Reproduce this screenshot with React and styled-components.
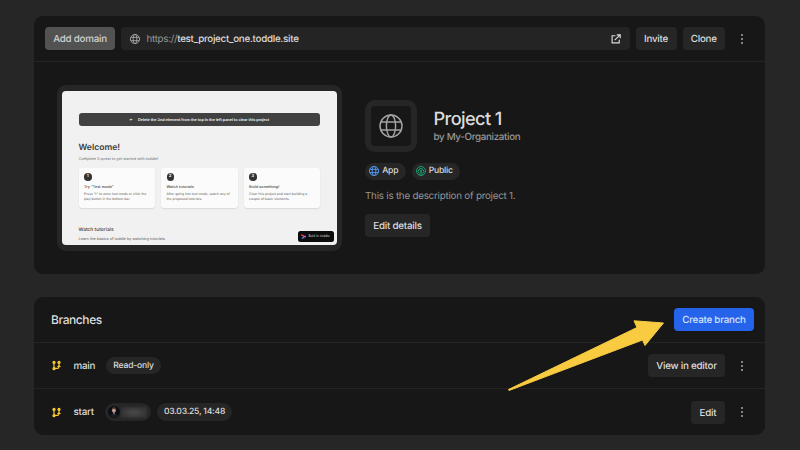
import React from "react";
import styled, { createGlobalStyle } from "styled-components";

const Global = createGlobalStyle`
  *, *::before, *::after { box-sizing: border-box; }
  body {
    margin: 0;
    background: #262626;
    color: #dcdcdc;
    font-family: Inter, "Liberation Sans", sans-serif;
    font-size: 10px;
    overflow: hidden;
    text-rendering: geometricPrecision;
  }
`;

const Page = styled.main`
  width: 800px;
  height: 450px;
  padding: 16px 35px 0 34px;
  display: flex;
  flex-direction: column;
  gap: 23.5px;
`;

const Card = styled.section`
  height: ${(p) => p.$height}px;
  flex: none;
  background: #171717;
  border-radius: 9px;
  overflow: hidden;
`;

const Toolbar = styled.header`
  height: 46px;
  display: flex;
  align-items: center;
  padding: 0 17px 0 11px;
  gap: 6px;
  border-bottom: 1px solid #242424;
`;

const Button = styled.button`
  width: ${(p) => p.$width}px;
  height: 23px;
  flex: none;
  padding: 2px 0 0;
  border: 0;
  border-radius: 4px;
  background: ${(p) => p.$background || "#262626"};
  color: ${(p) => p.$color || "#dcdcdc"};
  font: 500 9.8px/22px Inter, sans-serif;
  letter-spacing: -0.25px;
  text-rendering: inherit;
  white-space: nowrap;
`;

const UrlField = styled.div`
  flex: 1;
  height: 23px;
  display: flex;
  align-items: center;
  padding: 0 9px 0 9px;
  border-radius: 4px;
  background: #242424;
  font-size: 9.8px;
  font-weight: 500;
  letter-spacing: -0.29px;
`;

const UrlText = styled.span`
  flex: 1;
  margin-left: 6.5px;
  line-height: 22px;
  padding-top: 2px;
  white-space: nowrap;
`;

const Muted = styled.span`
  color: #959595;
  font-weight: 400;
`;

const Dots = styled.span`
  width: 12px;
  height: 12px;
  margin-left: ${(p) => p.$gap || 0}px;
  display: flex;
  flex-direction: column;
  align-items: center;
  justify-content: center;
  gap: 2px;
`;

const Dot = styled.i`
  width: 2px;
  height: 2px;
  border-radius: 1px;
  background: #a8a8a8;
`;

const Overview = styled.div`
  display: flex;
  padding: 23px 0 0 22.5px;
  gap: 23px;
`;

const Preview = styled.div`
  width: 285.5px;
  height: 165.5px;
  padding: 5.5px;
  border-radius: 9px;
  background: #262626;
`;

const PreviewPage = styled.div`
  height: 100%;
  padding: 22.6px 16.5px 0;
  border-radius: 4px;
  overflow: hidden;
  background: #f1f1f1;
  color: #3b3b3b;
  position: relative;
`;

const Banner = styled.div`
  height: 13px;
  border-radius: 3px;
  background: #414141;
  color: #fff;
  display: flex;
  align-items: center;
  justify-content: center;
  gap: 5px;
  font-size: 3.8px;
  font-weight: 600;
  white-space: nowrap;
`;

const PreviewLine = styled.div`
  margin-top: ${(p) => p.$top}px;
  height: ${(p) => p.$height}px;
  font-size: ${(p) => p.$size}px;
  line-height: ${(p) => p.$height}px;
  font-weight: ${(p) => p.$weight || 400};
  color: ${(p) => p.$color || "#3b3b3b"};
  white-space: nowrap;
`;

const Steps = styled.div`
  margin-top: 5.5px;
  display: grid;
  grid-template-columns: repeat(3, 1fr);
  gap: 6px;
`;

const Step = styled.div`
  height: 40.5px;
  padding: 5.5px 0 0 5.5px;
  border-radius: 3px;
  background: #fbfbfb;
  box-shadow: 0 1px 1.5px rgba(0, 0, 0, 0.1);
`;

const StepNumber = styled.div`
  width: 7.5px;
  height: 7.5px;
  border-radius: 50%;
  background: #333;
  color: #fff;
  font-size: 4.5px;
  font-weight: 600;
  line-height: 8.5px;
  text-align: center;
`;

const BuiltIn = styled.div`
  position: absolute;
  right: 3px;
  bottom: 3px;
  width: 36px;
  height: 11.5px;
  border-radius: 2.5px;
  background: #0c0c0c;
  color: #ddd;
  display: flex;
  align-items: center;
  padding-left: 3px;
  gap: 2.5px;
  font-size: 3.3px;
  white-space: nowrap;
`;

const Info = styled.div`
  padding-top: 15px;
`;

const Identity = styled.div`
  display: flex;
  gap: 17px;
`;

const IconBox = styled.div`
  width: 51.5px;
  height: 51.5px;
  border: 6px solid #262626;
  border-radius: 10px;
  display: grid;
  place-items: center;
`;

const Title = styled.h1`
  margin: 7.5px 0 0.5px;
  font-size: 18.2px;
  line-height: 22px;
  font-weight: 500;
  letter-spacing: -0.6px;
`;

const Owner = styled.div`
  color: #989898;
  font-size: 9.8px;
  font-weight: 500;
  line-height: 16px;
  letter-spacing: -0.32px;
`;

const Pills = styled.div`
  display: flex;
  gap: 6px;
  margin-top: 11px;
`;

const Pill = styled.span`
  width: ${(p) => p.$width}px;
  height: 17.5px;
  flex: none;
  padding: 0 ${(p) => (p.$icon ? p.$inset || 4 : 0)}px;
  border-radius: 9px;
  background: #262626;
  display: flex;
  align-items: center;
  justify-content: ${(p) => (p.$icon ? "flex-start" : "center")};
  gap: ${(p) => p.$gap || 3.2}px;
  font-size: 8.6px;
  font-weight: 500;
  letter-spacing: -0.22px;
  white-space: nowrap;
`;

const Description = styled.p`
  margin: 10px 0 9.5px;
  line-height: 14px;
  height: 14px;
  font-size: 9.8px;
  letter-spacing: -0.23px;
  color: #969696;
`;

const Row = styled.div`
  height: ${(p) => p.$height || 46}px;
  display: flex;
  align-items: center;
  padding: 0 ${(p) => p.$right || 17}px 0 17px;
  border-bottom: ${(p) => (p.$last ? 0 : 1)}px solid #242424;
`;

const Heading = styled.h2`
  margin: 0 auto 0 0;
  font-size: 12px;
  font-weight: 500;
  letter-spacing: -0.42px;
`;

const BranchName = styled.span`
  width: ${(p) => p.$width}px;
  margin-left: 11.5px;
  padding-top: 1px;
  font-size: 9.8px;
  letter-spacing: -0.25px;
  font-weight: 500;
`;

const RowTags = styled.div`
  flex: 1;
  display: flex;
  gap: 6px;
`;

const RedactedName = styled.span`
  width: 26px;
  height: 11px;
  background: radial-gradient(ellipse, #484848 10%, #333 75%);
  filter: blur(1px);
`;

const Arrow = styled.svg`
  position: absolute;
  left: 500px;
  top: 310px;
  pointer-events: none;
`;

function Globe({ size, color, stroke = 1.5 }) {
  return (
    <svg width={size} height={size} viewBox="0 0 24 24" fill="none" stroke={color} strokeWidth={stroke}>
      <circle cx="12" cy="12" r="11" />
      <ellipse cx="12" cy="12" rx="4.6" ry="11" />
      <path d="M2 8H22M2 16H22" />
    </svg>
  );
}

function ExternalIcon() {
  return (
    <svg width="10" height="10" viewBox="0 0 10 10" fill="none" stroke="#dedede" strokeWidth="1.15">
      <path d="M4.4 1.7H1.1V8.9H8.2V5.7M3.7 6.2L8.8 1.1M5.7.8H9.2V4.2" />
    </svg>
  );
}

function PublicIcon() {
  return (
    <svg width="10" height="10" viewBox="0 0 20 20" fill="none" stroke="#1ba574" strokeWidth="1.9">
      <circle cx="10" cy="10" r="9" />
      <path d="M6.6 14.6A5.4 5.4 0 1 1 13.4 14.6" />
      <circle cx="10" cy="9.6" r="1.5" />
      <path d="M8 18V15a2 2 0 0 1 4 0V18" />
    </svg>
  );
}

function BranchIcon() {
  return (
    <svg width="11" height="11" viewBox="0 0 11 11" fill="#f4c534" stroke="#f4c534">
      <path d="M3 2V9M8 2V5.5M3 8.4H6.5Q8 8.4 8 5.5" fill="none" strokeWidth="1.2" />
      <g stroke="none">
        <circle cx="3" cy="2.4" r="1.6" />
        <circle cx="8" cy="2.4" r="1.6" />
        <circle cx="3" cy="8.7" r="1.6" />
        <path d="M5.8 6.9L8 4.9L10.2 6.9Z" />
      </g>
    </svg>
  );
}

function Avatar() {
  return (
    <svg width="12" height="12" viewBox="0 0 12 12">
      <circle cx="6" cy="6" r="6" fill="#0b0f14" />
      <path d="M2 10Q3 7.8 6 7.6Q9 7.8 10 10A6 6 0 0 1 2 10" fill="#171c25" />
      <ellipse cx="5.9" cy="4.2" rx="1.9" ry="2.7" fill="#c29a8c" />
      <path d="M3.9 3.4Q4 1.2 6 1.2T7.9 3.4Q6 2 3.9 3.4" fill="#4b332c" />
      <path d="M5.1 6.4H6.7L6.2 9Z" fill="#b3a5a2" />
    </svg>
  );
}

function ToddleMark() {
  return (
    <svg width="5.5" height="5.5" viewBox="0 0 10 10" fill="none" strokeWidth="2.6" strokeLinecap="round">
      <path d="M1.5 2L4 3" stroke="#fa433d" />
      <path d="M5 4.4H8.5" stroke="#e14fb1" />
      <path d="M2.5 7.5L5 6.5" stroke="#4687f6" />
    </svg>
  );
}

function More({ gap }) {
  return <Dots $gap={gap}><Dot /><Dot /><Dot /></Dots>;
}

const steps = [
  ['Try "Test mode"', 'Press "t" to enter test mode or click the', "play button in the bottom bar."],
  ["Watch tutorials", "After going into test mode, watch any of", "the proposed tutorials."],
  ["Build something!", "Clear this project and start building a", "couple of basic elements."],
];

function SitePreview() {
  return (
    <Preview>
      <PreviewPage>
        <Banner><span>←</span><span>Delete the 2nd element from the top in the left panel to clear this project</span></Banner>
        <PreviewLine $top={16} $height={12} $size={8.6} $weight={600}>Welcome!</PreviewLine>
        <PreviewLine $top={2} $height={6} $size={3.85} $color="#6d6d6d">Complete 3 quest to get started with toddle!</PreviewLine>
        <Steps>
          {steps.map(([title, first, second], i) => (
            <Step key={title}>
              <StepNumber>{i + 1}</StepNumber>
              <PreviewLine $top={3} $height={6} $size={3.8} $weight={500}>{title}</PreviewLine>
              <PreviewLine $top={2.5} $height={4.8} $size={3.35} $color="#585858">{first}</PreviewLine>
              <PreviewLine $top={0} $height={4.8} $size={3.35} $color="#585858">{second}</PreviewLine>
            </Step>
          ))}
        </Steps>
        <PreviewLine $top={19} $height={7} $size={4.9} $weight={500}>Watch tutorials</PreviewLine>
        <PreviewLine $top={2} $height={6} $size={3.85} $color="#585858">Learn the basics of toddle by watching tutorials</PreviewLine>
        <BuiltIn><ToddleMark />Built in toddle</BuiltIn>
      </PreviewPage>
    </Preview>
  );
}

export default function App() {
  return (
    <Page>
      <Global />
      <Card $height={257.5}>
        <Toolbar>
          <Button $width={70} $background="#525252" $color="#d0d0d0">Add domain</Button>
          <UrlField>
            <Globe size={10} color="#aaa" stroke={2.1} />
            <UrlText><Muted>https://</Muted>test_project_one.toddle.site</UrlText>
            <ExternalIcon />
          </UrlField>
          <Button $width={41}>Invite</Button>
          <Button $width={42.5}>Clone</Button>
          <More gap={5} />
        </Toolbar>
        <Overview>
          <SitePreview />
          <Info>
            <Identity>
              <IconBox><Globe size={24} color="#a3a3a3" stroke={1.45} /></IconBox>
              <div>
                <Title>Project 1</Title>
                <Owner>by My-Organization</Owner>
              </div>
            </Identity>
            <Pills>
              <Pill $width={40.5} $icon><Globe size={10} color="#5294e8" stroke={2.4} />App</Pill>
              <Pill $width={48.5} $icon><PublicIcon />Public</Pill>
            </Pills>
            <Description>This is the description of project 1.</Description>
            <Button $width={65}>Edit details</Button>
          </Info>
        </Overview>
      </Card>
      <Card $height={138}>
        <Row $right={11}>
          <Heading>Branches</Heading>
          <Button $width={80} $background="#2563eb" $color="#d5e1fc">Create branch</Button>
        </Row>
        <Row>
          <BranchIcon />
          <BranchName $width={32.5}>main</BranchName>
          <RowTags><Pill $width={55}>Read-only</Pill></RowTags>
          <Button $width={77}>View in editor</Button>
          <More gap={11} />
        </Row>
        <Row $last>
          <BranchIcon />
          <BranchName $width={31.5}>start</BranchName>
          <RowTags>
            <Pill $width={46} $icon $inset={2.5} $gap={1.5}><Avatar /><RedactedName /></Pill>
            <Pill $width={75}>03.03.25, 14:48</Pill>
          </RowTags>
          <Button $width={34}>Edit</Button>
          <More gap={11} />
        </Row>
      </Card>
      <Arrow width="170" height="90" viewBox="0 0 170 90">
        <path d="M8.5 79.5L137 17.5L134 10.8L163.5 13L145 35.5L142.5 30L9 80.5Z" fill="#f9cb40" stroke="#f9cb40" strokeWidth="1" strokeLinejoin="round" />
      </Arrow>
    </Page>
  );
}
